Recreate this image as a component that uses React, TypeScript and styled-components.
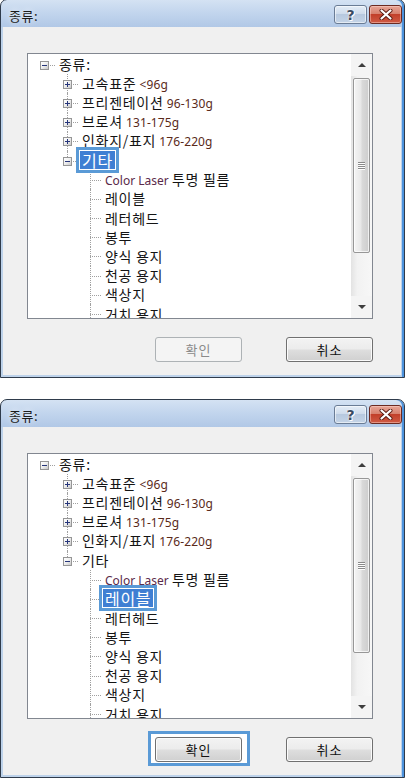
import React from "react";
import styled, { createGlobalStyle, css } from "styled-components";

const GlobalStyle = createGlobalStyle`
  html, body { margin: 0; padding: 0; background: #ffffff; }
  body {
    width: 407px;
    height: 778px;
    overflow: hidden;
    font-family: "Noto Sans", "Noto Sans CJK KR", sans-serif;
  }
  * { box-sizing: border-box; }
`;

const Page = styled.div`
  display: flex;
  flex-direction: column;
  gap: 21px;
  width: 407px;
  margin-top: -1px;
`;

const Window = styled.section`
  width: 405px;
  height: 379px;
  display: flex;
  flex-direction: column;
  border: 1px solid #2f3b4b;
  border-radius: 7px 7px 0 0;
  padding: 0 3px 2px 2px;
  background: linear-gradient(
    to bottom,
    #d4e2f3 0px,
    #c2d5ed 13px,
    #b1c8e6 27px,
    #bdd2ea 27px,
    #bdd2ea 100%
  );
  box-shadow: inset -2px 0 0 #4d93dd;
  overflow: hidden;
`;

const TitleBar = styled.header`
  height: 27px;
  display: flex;
  align-items: flex-start;
  padding-left: 6px;
`;

const TitleText = styled.div`
  padding-top: 6px;
  line-height: 19px;
  font-size: 13px;
  letter-spacing: 0.5px;
  color: #1c1c1c;
  font-family: "Noto Sans CJK KR", sans-serif;
  text-shadow: 0 0 6px rgba(255, 255, 255, 0.9);
`;

const CaptionButtons = styled.div`
  margin-left: auto;
  margin-right: -1px;
  margin-top: 5px;
  display: flex;
  gap: 2px;
`;

const CaptionButton = styled.div<{ $kind: "help" | "close" }>`
  width: 33px;
  height: 19px;
  border-radius: 3px;
  display: flex;
  align-items: center;
  justify-content: center;
  ${(p) =>
    p.$kind === "help"
      ? css`
          border: 1px solid #6a7c95;
          background: linear-gradient(to bottom, #e4edf7 0%, #cfdcec 45%, #b7c9df 50%, #c4d4e7 100%);
          box-shadow: inset 0 0 0 1px rgba(255, 255, 255, 0.55);
        `
      : css`
          border: 1px solid #6b2a21;
          background: linear-gradient(to bottom, #e7a597 0%, #d7826f 45%, #c2402a 50%, #cf5b45 100%);
          box-shadow: inset 0 0 0 1px rgba(255, 220, 210, 0.45);
        `}
`;

const HelpGlyph = styled.span`
  font-family: "DejaVu Sans", sans-serif;
  font-weight: bold;
  font-size: 14px;
  line-height: 14px;
  color: #3a4b63;
  text-shadow: 0 0 1px #fff, 0 0 2px #fff, 1px 1px 0 #fff;
`;

const Client = styled.div`
  flex: 1;
  background: #f0f0f0;
  display: flex;
  flex-direction: column;
  padding: 26px 0 0 24px;
`;

const TreeBox = styled.div`
  width: 346px;
  height: 266px;
  border: 1px solid #828790;
  background: #ffffff;
  display: flex;
`;

const TreeList = styled.div`
  flex: 1;
  overflow: hidden;
  padding: 1px 0 0 5px;
`;

const Row = styled.div`
  height: 19.2px;
  display: flex;
  align-items: center;
  white-space: nowrap;
`;

const Indent = styled.div<{ $level: number }>`
  width: ${(p) => p.$level * 23}px;
  flex: none;
  align-self: stretch;
`;

const Connector = styled.div<{ $root: boolean; $last: boolean }>`
  position: relative;
  width: 23px;
  flex: none;
  align-self: stretch;
  ${(p) =>
    !p.$root &&
    css`
      &::before {
        content: "";
        position: absolute;
        left: 11px;
        top: 0;
        height: ${p.$last ? "50%" : "100%"};
        border-left: 1px dotted #a0a0a0;
      }
    `}
  &::after {
    content: "";
    position: absolute;
    left: 11px;
    right: 1px;
    top: 50%;
    border-top: 1px dotted #a0a0a0;
  }
`;

const Expander = styled.span<{ $open: boolean }>`
  position: absolute;
  left: 7px;
  top: 50%;
  margin-top: -4px;
  width: 9px;
  height: 9px;
  border: 1px solid #969696;
  background: linear-gradient(135deg, #ffffff 0%, #f0f0f0 45%, #c9c9c9 100%);
  z-index: 1;
  &::before {
    content: "";
    position: absolute;
    left: 1px;
    top: 3px;
    width: 5px;
    height: 1px;
    background: #26357a;
  }
  ${(p) =>
    !p.$open &&
    css`
      &::after {
        content: "";
        position: absolute;
        left: 3px;
        top: 1px;
        width: 1px;
        height: 5px;
        background: #26357a;
      }
    `}
`;

const Label = styled.span`
  padding-left: 3px;
  font-family: "Noto Sans CJK KR", sans-serif;
  font-size: 14px;
  letter-spacing: 0.7px;
  color: #141414;
  line-height: 19px;
`;

const Weight = styled.span`
  font-family: "Noto Sans", sans-serif;
  font-size: 12px;
  letter-spacing: 0.1px;
  color: #5a2a1a;
`;

const Latin = styled.span`
  font-family: "Noto Sans", sans-serif;
  font-size: 12px;
  letter-spacing: 0;
  color: #5a2a4a;
`;

const Selected = styled.span`
  display: inline-block;
  margin-left: -2px;
  padding: 0 2px;
  background: #3f7fd3;
  color: #ffffff;
  font-size: 16px;
  line-height: 18px;
  box-shadow: 0 0 0 1px #ffffff, 0 0 0 4px #5a9ad6;
  position: relative;
  z-index: 2;
`;

const ScrollBar = styled.div`
  width: 21px;
  flex: none;
  display: flex;
  flex-direction: column;
  background: linear-gradient(to right, #e3e3e3 0%, #f2f2f2 30%, #f7f7f7 100%);
`;

const ArrowButton = styled.div`
  height: 22px;
  display: flex;
  align-items: center;
  justify-content: center;
  background: #f4f4f4;
`;

const Arrow = styled.span<{ $down?: boolean }>`
  width: 0;
  height: 0;
  border-left: 4px solid transparent;
  border-right: 4px solid transparent;
  ${(p) =>
    p.$down
      ? css`border-top: 4px solid #3d3d3d;`
      : css`border-bottom: 4px solid #3d3d3d;`}
`;

const Track = styled.div`
  flex: 1;
  padding: 2px 2px 0 2px;
`;

const Thumb = styled.div`
  height: 175px;
  border: 1px solid #979797;
  border-radius: 2px;
  background: linear-gradient(to right, #f4f4f4 0%, #e8e8e8 45%, #d9d9d9 55%, #cdcdcd 100%);
  box-shadow: inset 0 0 0 1px rgba(255, 255, 255, 0.7);
  display: flex;
  flex-direction: column;
  align-items: center;
  justify-content: center;
  gap: 1px;
`;

const Grip = styled.span`
  width: 7px;
  height: 1px;
  background: #8a8a8a;
  box-shadow: 0 1px 0 #fdfdfd;
`;

const ButtonRow = styled.div`
  width: 346px;
  margin-top: 18px;
  display: flex;
  justify-content: flex-end;
  gap: 44px;
`;

const Focus = styled.span`
  position: relative;
  display: inline-flex;
  &::before {
    content: "";
    position: absolute;
    inset: -6px -8px -4px -7px;
    background: #ffffff;
    border: 3px solid #5a9ad6;
  }
`;

const PushButton = styled.button`
  position: relative;
  width: 87px;
  height: 25px;
  padding: 0;
  border: 1px solid #707070;
  border-radius: 3px;
  background: linear-gradient(to bottom, #f3f3f3 0%, #ececec 48%, #dedede 52%, #d0d0d0 100%);
  box-shadow: inset 0 0 0 1px #fbfbfb;
  font-family: "Noto Sans CJK KR", sans-serif;
  font-size: 13px;
  letter-spacing: 1px;
  color: #111;
  &:disabled {
    border-color: #adb2b5;
    background: #f4f4f4;
    box-shadow: none;
    color: #8a8a8a;
  }
`;

type TreeItem = {
  level: number;
  text: string;
  weight?: string;
  latin?: string;
  expander?: "open" | "closed";
  last?: boolean;
};

const items: TreeItem[] = [
  { level: 0, text: "종류:", expander: "open", last: true },
  { level: 1, text: "고속표준", weight: "<96g", expander: "closed" },
  { level: 1, text: "프리젠테이션", weight: "96-130g", expander: "closed" },
  { level: 1, text: "브로셔", weight: "131-175g", expander: "closed" },
  { level: 1, text: "인화지/표지", weight: "176-220g", expander: "closed" },
  { level: 1, text: "기타", expander: "open", last: true },
  { level: 2, text: "투명 필름", latin: "Color Laser" },
  { level: 2, text: "레이블" },
  { level: 2, text: "레터헤드" },
  { level: 2, text: "봉투" },
  { level: 2, text: "양식 용지" },
  { level: 2, text: "천공 용지" },
  { level: 2, text: "색상지" },
  { level: 2, text: "거치 용지" },
];

function Tree({ selected }: { selected: number }) {
  return (
    <TreeBox>
      <TreeList>
        {items.map((it, i) => (
          <Row key={i}>
            <Indent $level={it.level} />
            <Connector $root={it.level === 0} $last={!!it.last}>
              {it.expander && <Expander $open={it.expander === "open"} />}
            </Connector>
            <Label>
              {i === selected ? (
                <Selected>{it.text}</Selected>
              ) : (
                <>
                  {it.latin && <Latin>{it.latin} </Latin>}
                  {it.text}
                  {it.weight && <Weight> {it.weight}</Weight>}
                </>
              )}
            </Label>
          </Row>
        ))}
      </TreeList>
      <ScrollBar>
        <ArrowButton>
          <Arrow />
        </ArrowButton>
        <Track>
          <Thumb>
            <Grip />
            <Grip />
            <Grip />
            <Grip />
          </Thumb>
        </Track>
        <ArrowButton>
          <Arrow $down />
        </ArrowButton>
      </ScrollBar>
    </TreeBox>
  );
}

function CloseIcon() {
  return (
    <svg width="14" height="11" viewBox="0 0 14 11">
      <path d="M2.5 1.5 L11.5 9.5 M11.5 1.5 L2.5 9.5" stroke="#5a1c12" strokeWidth="4" strokeLinecap="round" />
      <path d="M2.5 1.5 L11.5 9.5 M11.5 1.5 L2.5 9.5" stroke="#ffffff" strokeWidth="2.2" strokeLinecap="round" />
    </svg>
  );
}

function Dialog({ selected, focusOk }: { selected: number; focusOk: boolean }) {
  return (
    <Window>
      <TitleBar>
        <TitleText>종류:</TitleText>
        <CaptionButtons>
          <CaptionButton $kind="help">
            <HelpGlyph>?</HelpGlyph>
          </CaptionButton>
          <CaptionButton $kind="close">
            <CloseIcon />
          </CaptionButton>
        </CaptionButtons>
      </TitleBar>
      <Client>
        <Tree selected={selected} />
        <ButtonRow>
          {focusOk ? (
            <Focus>
              <PushButton>확인</PushButton>
            </Focus>
          ) : (
            <PushButton disabled>확인</PushButton>
          )}
          <PushButton>취소</PushButton>
        </ButtonRow>
      </Client>
    </Window>
  );
}

export default function App() {
  return (
    <>
      <GlobalStyle />
      <Page>
        <Dialog selected={5} focusOk={false} />
        <Dialog selected={7} focusOk={true} />
      </Page>
    </>
  );
}
